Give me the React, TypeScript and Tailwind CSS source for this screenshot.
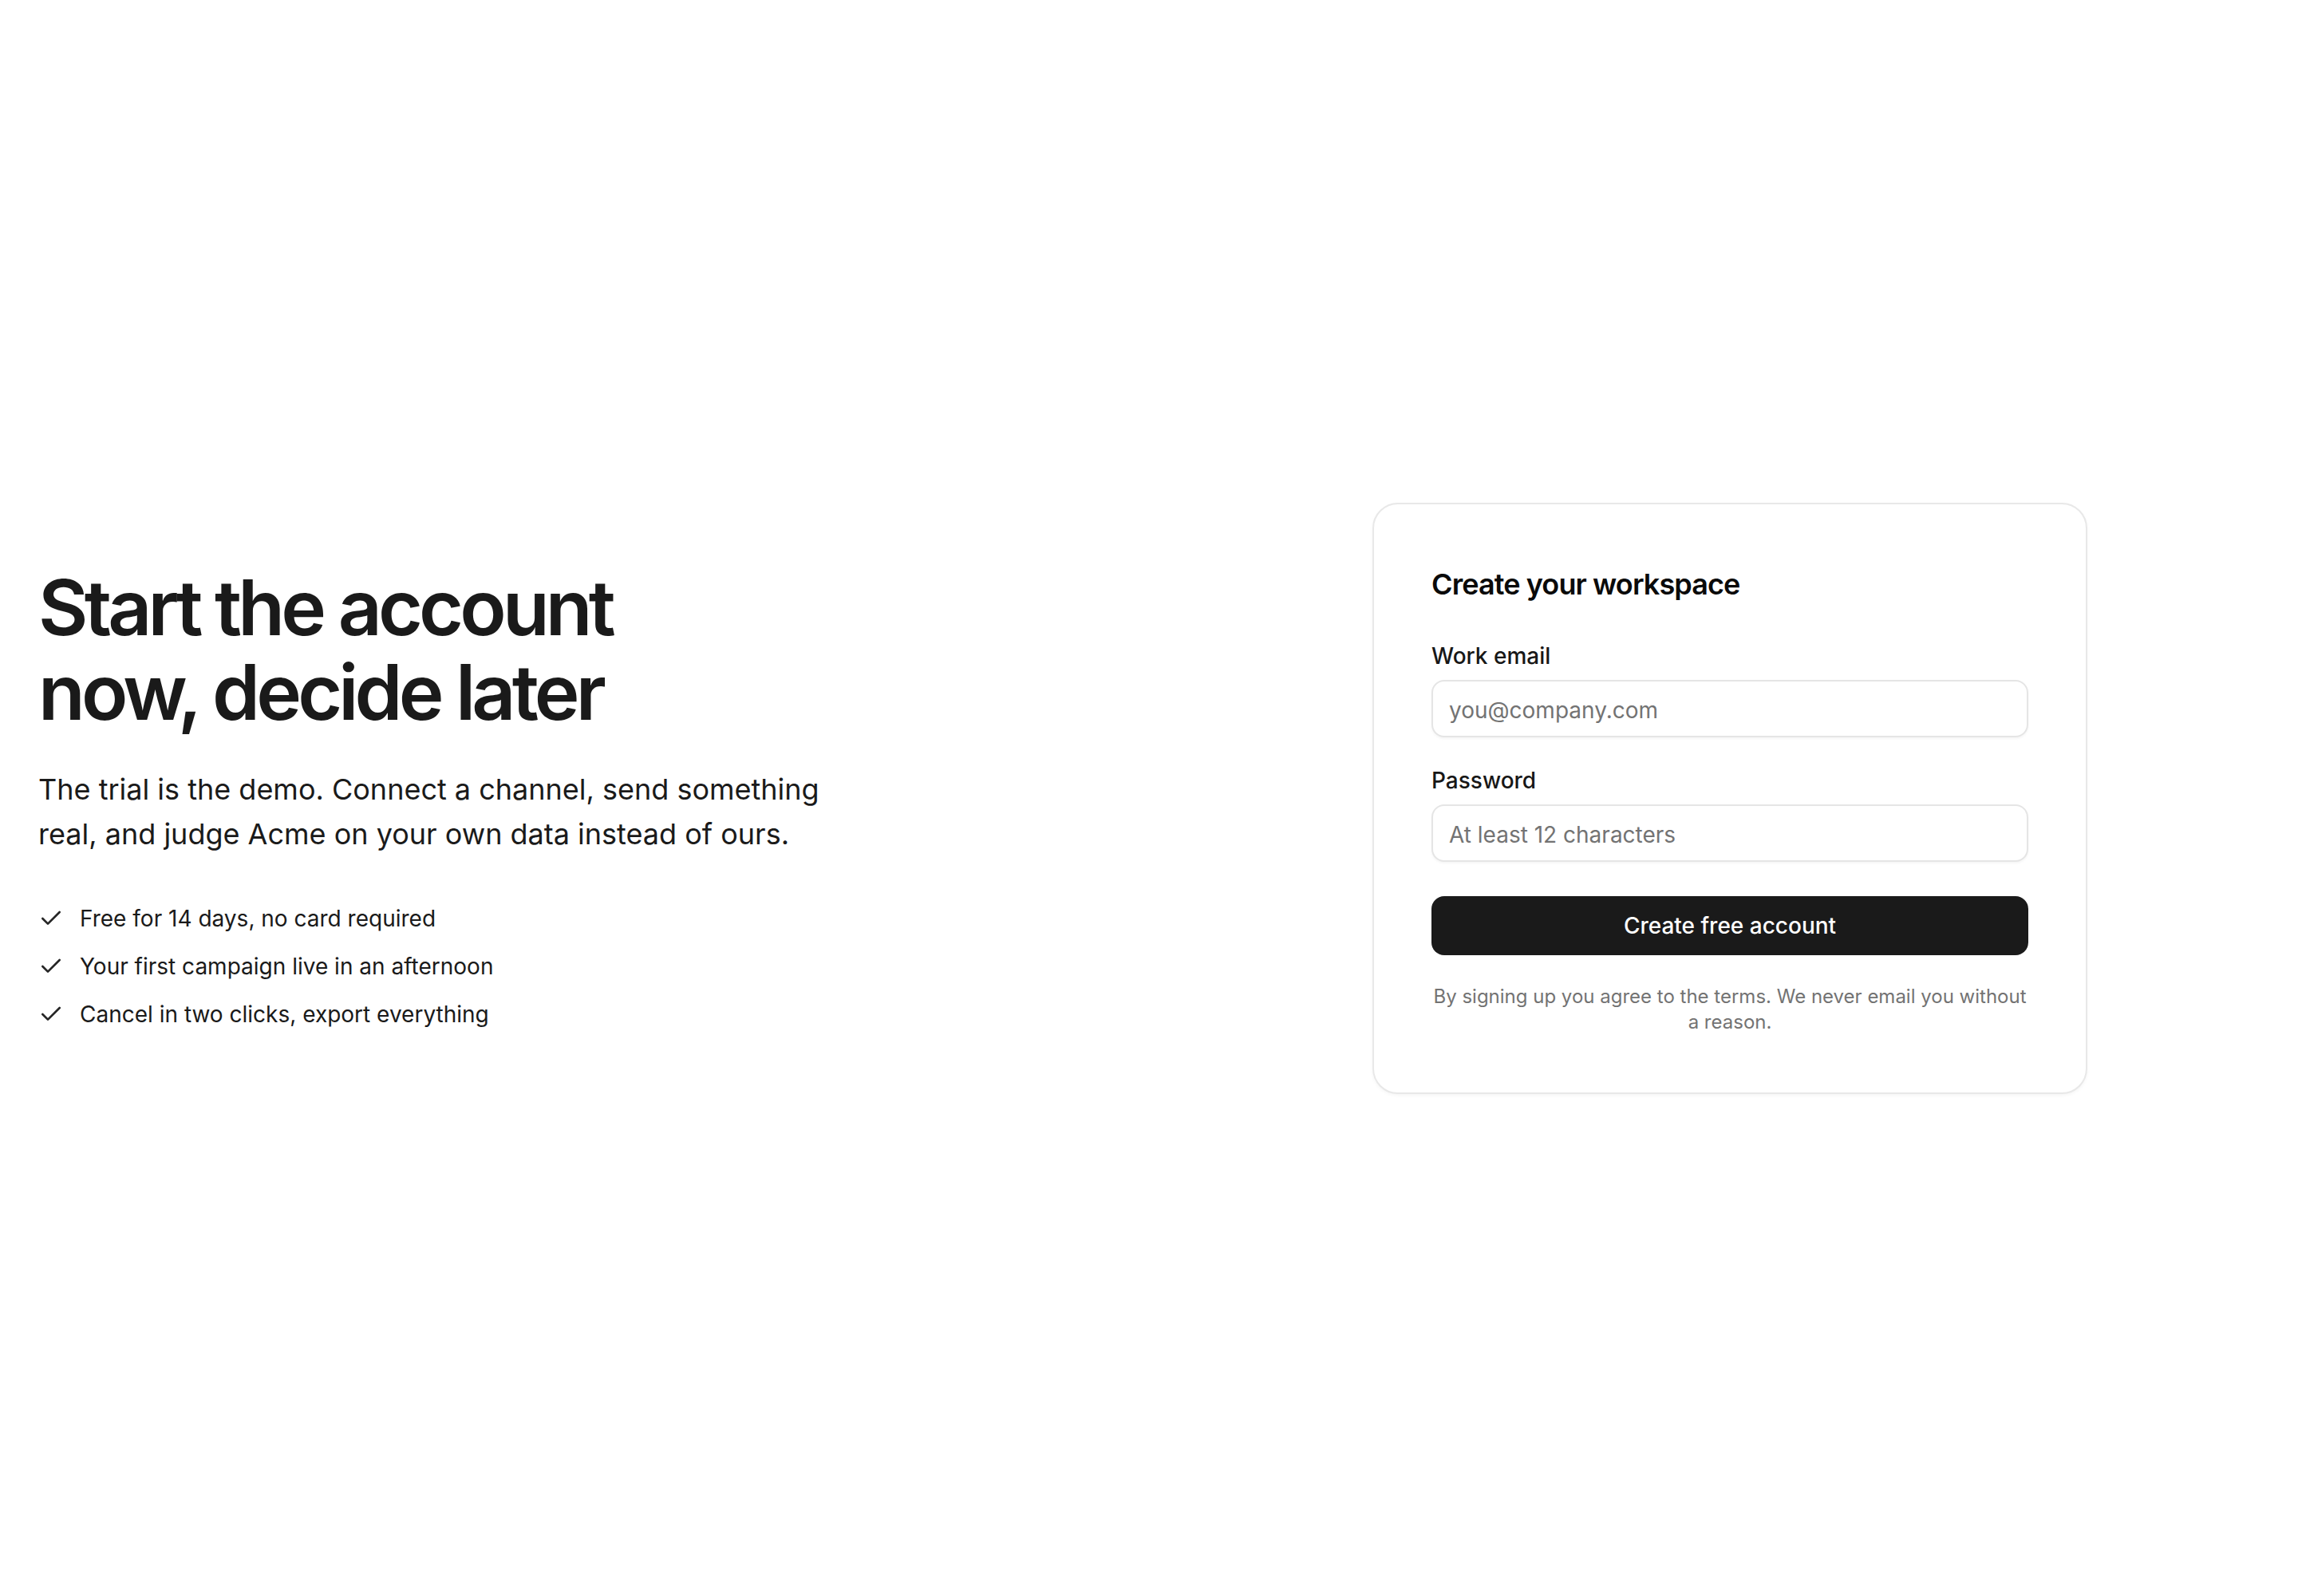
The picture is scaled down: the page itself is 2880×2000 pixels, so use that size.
import { Check } from "lucide-react";

const PERKS = [
  "Free for 14 days, no card required",
  "Your first campaign live in an afternoon",
  "Cancel in two clicks, export everything",
];

function Field({ label, type, placeholder }: { label: string; type: string; placeholder: string }) {
  return (
    <label className="flex flex-col">
      <span className="text-[28px] leading-[40px] font-medium text-[#171717]">{label}</span>
      <input
        type={type}
        placeholder={placeholder}
        className="mt-[10px] h-[72px] w-full rounded-[16px] border-2 border-[#e5e5e5] bg-white px-[20px] pt-[4px] text-[28px] text-[#171717] placeholder:text-[#737373] shadow-[0_2px_3px_rgba(0,0,0,0.04)] outline-none"
      />
    </label>
  );
}

export default function App() {
  return (
    <div className="min-h-screen bg-white flex items-center font-['Inter','Noto_Sans',sans-serif] text-[#171717]">
      <div className="grid w-full grid-cols-2 items-center gap-[128px] px-[48px]">
        {/* Left: pitch */}
        <div>
          <h1 className="text-[96px] leading-[105.6px] font-semibold tracking-[-0.05em] text-[#1a1a1a]">
            Start the account
            <br />
            now, decide later
          </h1>
          <p className="mt-[40px] max-w-[1024px] text-[36px] leading-[56px] text-[#1a1a1a]">
            The trial is the demo. Connect a channel, send something real, and judge Acme on your own data instead of ours.
          </p>
          <ul className="mt-[58px] flex flex-col gap-[20px]">
            {PERKS.map((p) => (
              <li key={p} className="flex items-center gap-[20px] text-[28px] leading-[40px] text-[#1a1a1a]">
                <Check size={32} strokeWidth={2} className="shrink-0 text-[#262626]" />
                {p}
              </li>
            ))}
          </ul>
        </div>

        {/* Right: signup card */}
        <div className="mx-auto w-[896px] rounded-[32px] border-2 border-[#e8e8e8] bg-white p-[72px] shadow-[0_2px_4px_rgba(0,0,0,0.04)]">
          <h2 className="text-[36px] leading-[56px] font-semibold tracking-[-0.025em] text-[#0a0a0a]">
            Create your workspace
          </h2>
          <form className="mt-[42px] flex flex-col gap-[34px]" onSubmit={(e) => e.preventDefault()}>
            <Field label="Work email" type="email" placeholder="you@company.com" />
            <Field label="Password" type="password" placeholder="At least 12 characters" />
          </form>
          <button
            type="button"
            className="mt-[43px] h-[74px] w-full rounded-[16px] bg-[#1a1a1a] text-[28px] font-medium text-white"
          >
            Create free account
          </button>
          <p className="mt-[36px] text-center text-[24px] leading-[32px] text-[#737373]">
            By signing up you agree to the terms. We never email you without a reason.
          </p>
        </div>
      </div>
    </div>
  );
}
